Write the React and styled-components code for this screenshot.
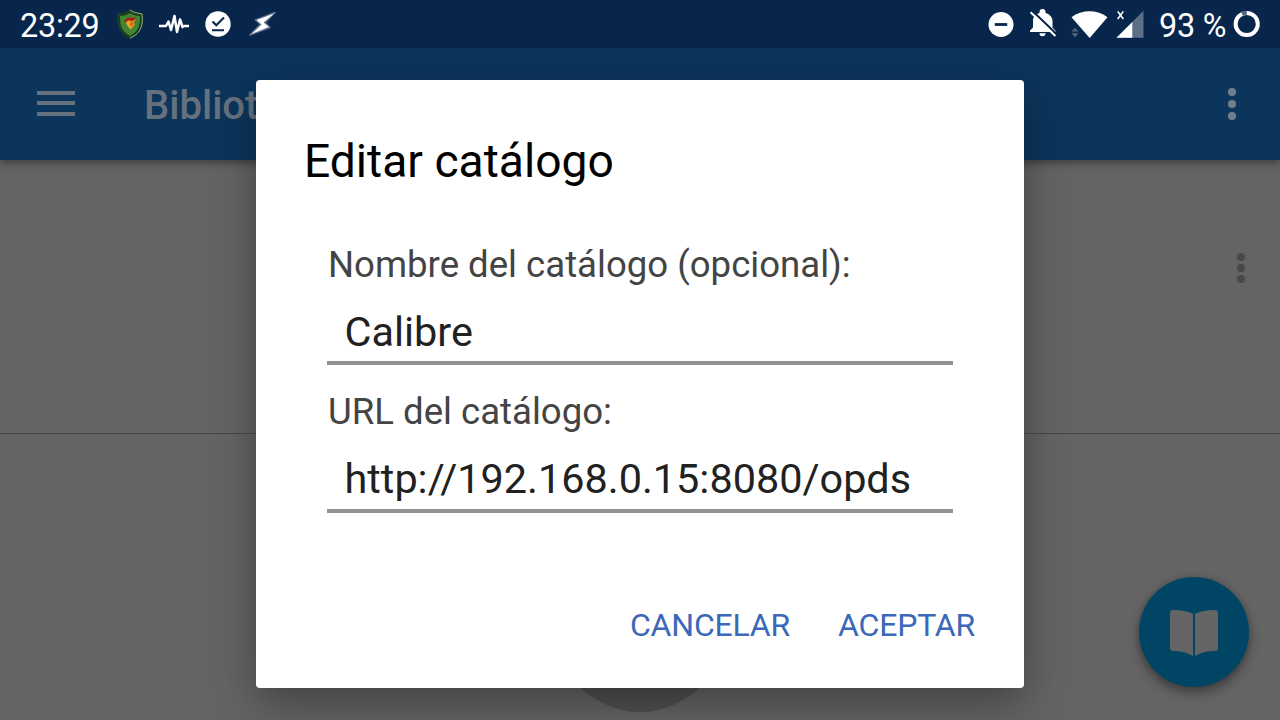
import React from "react";
import styled, { createGlobalStyle } from "styled-components";

const GlobalStyle = createGlobalStyle`
    body {
        margin: 0;
        overflow: hidden;
        font-family: Roboto, sans-serif;
    }
`;

const Screen = styled.div`
    position: relative;
    display: flex;
    flex-direction: column;
    width: 1280px;
    height: 720px;
    overflow: hidden;
    background: #646464;
`;

const StatusBar = styled.header`
    display: flex;
    justify-content: space-between;
    height: 48px;
    box-sizing: border-box;
    padding: 0 20px;
    flex: none;
    background: #08264c;
    color: #fff;
`;

const StatusGroup = styled.div`
    display: flex;
    align-items: center;
    height: 48px;
`;

const StatusText = styled.span`
    width: ${(p) => p.$width}px;
    margin: 3px 0 0 ${(p) => p.$gap || 0}px;
    font-size: 32.4px;
    line-height: 48px;
    letter-spacing: -0.25px;
    white-space: nowrap;
`;

const StatusIcon = styled.svg`
    display: block;
    flex: none;
    width: ${(p) => p.$width}px;
    height: 48px;
    margin-left: ${(p) => p.$gap || 0}px;
`;

const Toolbar = styled.nav`
    position: relative;
    display: flex;
    align-items: center;
    flex: none;
    height: 112px;
    box-sizing: border-box;
    padding: 0 44px 0 37px;
    background: #0c355b;
    box-shadow: 0 3px 8px rgba(0, 0, 0, 0.4);
`;

const MenuButton = styled.div`
    display: flex;
    flex-direction: column;
    gap: 6.5px;
    width: 38px;
    margin-bottom: 1.5px;
`;

const MenuLine = styled.span`
    height: 4px;
    background: #66717e;
`;

const ToolbarTitle = styled.h1`
    flex: 1;
    margin: 4px 0 0 69px;
    color: #66717e;
    font-size: 40px;
    font-weight: 500;
    line-height: 48px;
`;

const Dots = styled.div`
    display: flex;
    flex-direction: column;
    gap: ${(p) => p.$gap}px;
    color: ${(p) => p.$color};
`;

const Dot = styled.i`
    width: 8px;
    height: 8px;
    border-radius: 50%;
    background: currentColor;
`;

const CatalogRow = styled.section`
    display: flex;
    align-items: center;
    justify-content: flex-end;
    flex: none;
    height: 274px;
    box-sizing: border-box;
    padding: 0 35px 57px 0;
    border-bottom: 1px solid #484848;
`;

const Spinner = styled.div`
    position: absolute;
    left: 556px;
    bottom: 8px;
    width: 168px;
    height: 168px;
    border-radius: 50%;
    background: #505050;
`;

const Fab = styled.button`
    position: absolute;
    left: 1139px;
    top: 577px;
    display: grid;
    place-items: center;
    width: 110px;
    height: 110px;
    padding: 2px 0 0;
    border: 0;
    border-radius: 50%;
    background: #004664;
    box-shadow: 0 6px 12px rgba(0, 0, 0, 0.36), 0 0 6px rgba(0, 0, 0, 0.15);
`;

const Dialog = styled.div`
    position: absolute;
    left: 256px;
    top: 80px;
    display: flex;
    flex-direction: column;
    width: 768px;
    height: 608px;
    box-sizing: border-box;
    padding: 52px 48px 35px;
    border-radius: 4px;
    background: #fff;
    box-shadow: 0 16px 44px rgba(0, 0, 0, 0.34);
`;

const DialogTitle = styled.h2`
    margin: 0;
    color: #000;
    font-size: 46.2px;
    font-weight: 400;
    line-height: 58px;
`;

const Form = styled.div`
    padding: 51px 23px 0;
`;

const Field = styled.div`
    height: 147px;
`;

const Label = styled.label`
    display: block;
    padding-left: 1px;
    color: #444;
    font-size: 36.6px;
    line-height: 48px;
`;

const Value = styled.div`
    height: ${(p) => p.$height}px;
    box-sizing: border-box;
    padding: 16px 0 0 17.5px;
    border-bottom: 4px solid #929292;
    color: #212121;
    font-size: 41.4px;
    line-height: 54px;
    white-space: nowrap;
`;

const Actions = styled.div`
    display: flex;
    justify-content: flex-end;
    gap: 48px;
    margin: auto 1px 0 0;
`;

const Action = styled.button`
    padding: 0;
    border: 0;
    background: none;
    color: #3b68b9;
    font-family: inherit;
    font-size: 32px;
    line-height: 56px;
    letter-spacing: -0.2px;
`;

function MoreDots({ color, gap }) {
    return (
        <Dots $color={color} $gap={gap}>
            <Dot />
            <Dot />
            <Dot />
        </Dots>
    );
}

function Shield() {
    return (
        <StatusIcon $width={28} $gap={16} viewBox="116 0 28 48">
            <path d="M130 9C126 12 121 13 117 13C116 24 118 34 130 39C142 34 144 24 143 13C138 13 134 12 130 9Z" fill="#173d22" />
            <path d="M130 10C134 13 138 13 142 14C143 24 142 33 130 38" fill="none" stroke="#a3bd98" strokeWidth="0.9" />
            <path d="M130 13C127 15 124 16 120 16C120 25 121 31 130 36C139 31 140 25 140 16C136 16 133 15 130 13Z" fill="#438332" />
            <path d="M125 21L128 18L136 18.5L134 22L134.5 25L130.5 29.5L127 25Z" fill="#e7a91e" />
            <path d="M124.5 20.5L128 17.5L136.5 18L133 21L128 20.5L125.5 23Z" fill="#a52019" />
            <path d="M130 21.5L134 22L132.5 26.5L130 26Z" fill="#e26c1c" />
        </StatusIcon>
    );
}

function Pulse() {
    return (
        <StatusIcon $width={30} $gap={15} viewBox="159 0 30 48">
            <path d="M159 26H166L168.5 21.5L171 30L174.5 16L177 32L180 19.5L182.5 27L184 26H189" fill="none" stroke="#fff" strokeWidth="2.5" strokeLinejoin="round" />
        </StatusIcon>
    );
}

function Downloaded() {
    return (
        <StatusIcon $width={26} $gap={16} viewBox="205 0 26 48">
            <circle cx="218" cy="24" r="12.7" fill="#fff" />
            <path d="M212.5 21.5L216.3 25.2L224 17.5M212 30.3H224" fill="none" stroke="#08264c" strokeWidth="2.1" />
        </StatusIcon>
    );
}

function Bolt() {
    return (
        <StatusIcon $width={28} $gap={18} viewBox="249 0 28 48">
            <path d="M275 12.5L255.5 20L260.5 24.5L250 35L270 27.5L265 22.5Z" fill="none" stroke="#8794a9" strokeWidth="1.6" strokeLinejoin="round" opacity="0.7" />
            <path d="M274 13.5L256.5 20L261.5 24.5L251.5 34L269 27L263.8 22.5Z" fill="#fff" />
        </StatusIcon>
    );
}

function DoNotDisturb() {
    return (
        <StatusIcon $width={26} viewBox="988.5 0 26 48">
            <circle cx="1001.5" cy="24.5" r="12.5" fill="#fff" />
            <path d="M995.3 24.5H1007.7" stroke="#08264c" strokeWidth="2.8" />
        </StatusIcon>
    );
}

function BellOff() {
    return (
        <StatusIcon $width={28} $gap={14.5} viewBox="1029 0 28 48">
            <path d="M1030 32V30.5L1033 27.5V21C1033 16.8 1035.5 14 1039.5 13V12A3 3 0 0 1 1045.5 12V13C1049.5 14 1052.5 17 1052.5 21V27.5L1055.7 31V32ZM1039.5 33.2H1045.5A3 3 0 0 1 1039.5 33.2Z" fill="#fff" />
            <path d="M1032.2 10.7L1057 34.5" stroke="#08264c" strokeWidth="2.2" />
            <path d="M1030.6 12.3L1055.4 36" stroke="#fff" strokeWidth="2" />
        </StatusIcon>
    );
}

function Wifi() {
    return (
        <StatusIcon $width={38} $gap={13} viewBox="1070 0 38 48">
            <path d="M1071.5 17.2C1082 9.4 1097 9.4 1107.5 17.2L1089.7 38Z" fill="#fff" />
            <path d="M1070 26H1077.5L1081 30V38H1070Z" fill="#08264c" />
            <path d="M1071.5 31.5L1075 27.7L1078.5 31.5ZM1071.5 33.3L1075 37.2L1078.5 33.3Z" fill="#52677f" />
        </StatusIcon>
    );
}

function Signal() {
    return (
        <StatusIcon $width={28} $gap={8.5} viewBox="1116.5 0 28 48">
            <path d="M1144 10.8V37.8H1117Z" fill="#5d6e87" />
            <path d="M1132.8 22V37.8H1117Z" fill="#fff" />
            <path d="M1118.2 11.4L1123.8 19M1123.8 11.4L1118.2 19" stroke="#fff" strokeWidth="1.6" />
        </StatusIcon>
    );
}

function Battery() {
    return (
        <StatusIcon $width={28} $gap={6} viewBox="1232.5 0 28 48">
            <circle cx="1247.2" cy="24" r="11.1" fill="none" stroke="#fff" strokeWidth="4" />
            <path d="M1242.6 13.9A11.1 11.1 0 0 1 1247.2 12.9" fill="none" stroke="#52677f" strokeWidth="4.4" />
        </StatusIcon>
    );
}

function Book() {
    return (
        <svg width="50" height="48" viewBox="0 0 50 48">
            <path d="M1 4Q1 1 4 1C12 1 19 2 24 5V47C17 43 11 42 4 42Q1 42 1 39ZM26 5C32 2 38 1 46 1Q49 1 49 4V39Q49 42 46 42C39 42 33 43 26 47Z" fill="#646464" />
        </svg>
    );
}

export default function App() {
    return (
        <Screen>
            <GlobalStyle />
            <StatusBar>
                <StatusGroup>
                    <StatusText $width={80}>23:29</StatusText>
                    <Shield />
                    <Pulse />
                    <Downloaded />
                    <Bolt />
                </StatusGroup>
                <StatusGroup>
                    <DoNotDisturb />
                    <BellOff />
                    <Wifi />
                    <Signal />
                    <StatusText $width={67} $gap={15}>93 %</StatusText>
                    <Battery />
                </StatusGroup>
            </StatusBar>
            <Toolbar>
                <MenuButton>
                    <MenuLine />
                    <MenuLine />
                    <MenuLine />
                </MenuButton>
                <ToolbarTitle>Bibliotecas</ToolbarTitle>
                <MoreDots color="#707f8d" gap={4} />
            </Toolbar>
            <CatalogRow>
                <MoreDots color="#484848" gap={3} />
            </CatalogRow>
            <Spinner />
            <Fab>
                <Book />
            </Fab>
            <Dialog>
                <DialogTitle>Editar catálogo</DialogTitle>
                <Form>
                    <Field>
                        <Label>Nombre del catálogo (opcional):</Label>
                        <Value $height={76}>Calibre</Value>
                    </Field>
                    <Field>
                        <Label>URL del catálogo:</Label>
                        <Value $height={77}>http://192.168.0.15:8080/opds</Value>
                    </Field>
                </Form>
                <Actions>
                    <Action>CANCELAR</Action>
                    <Action>ACEPTAR</Action>
                </Actions>
            </Dialog>
        </Screen>
    );
}
